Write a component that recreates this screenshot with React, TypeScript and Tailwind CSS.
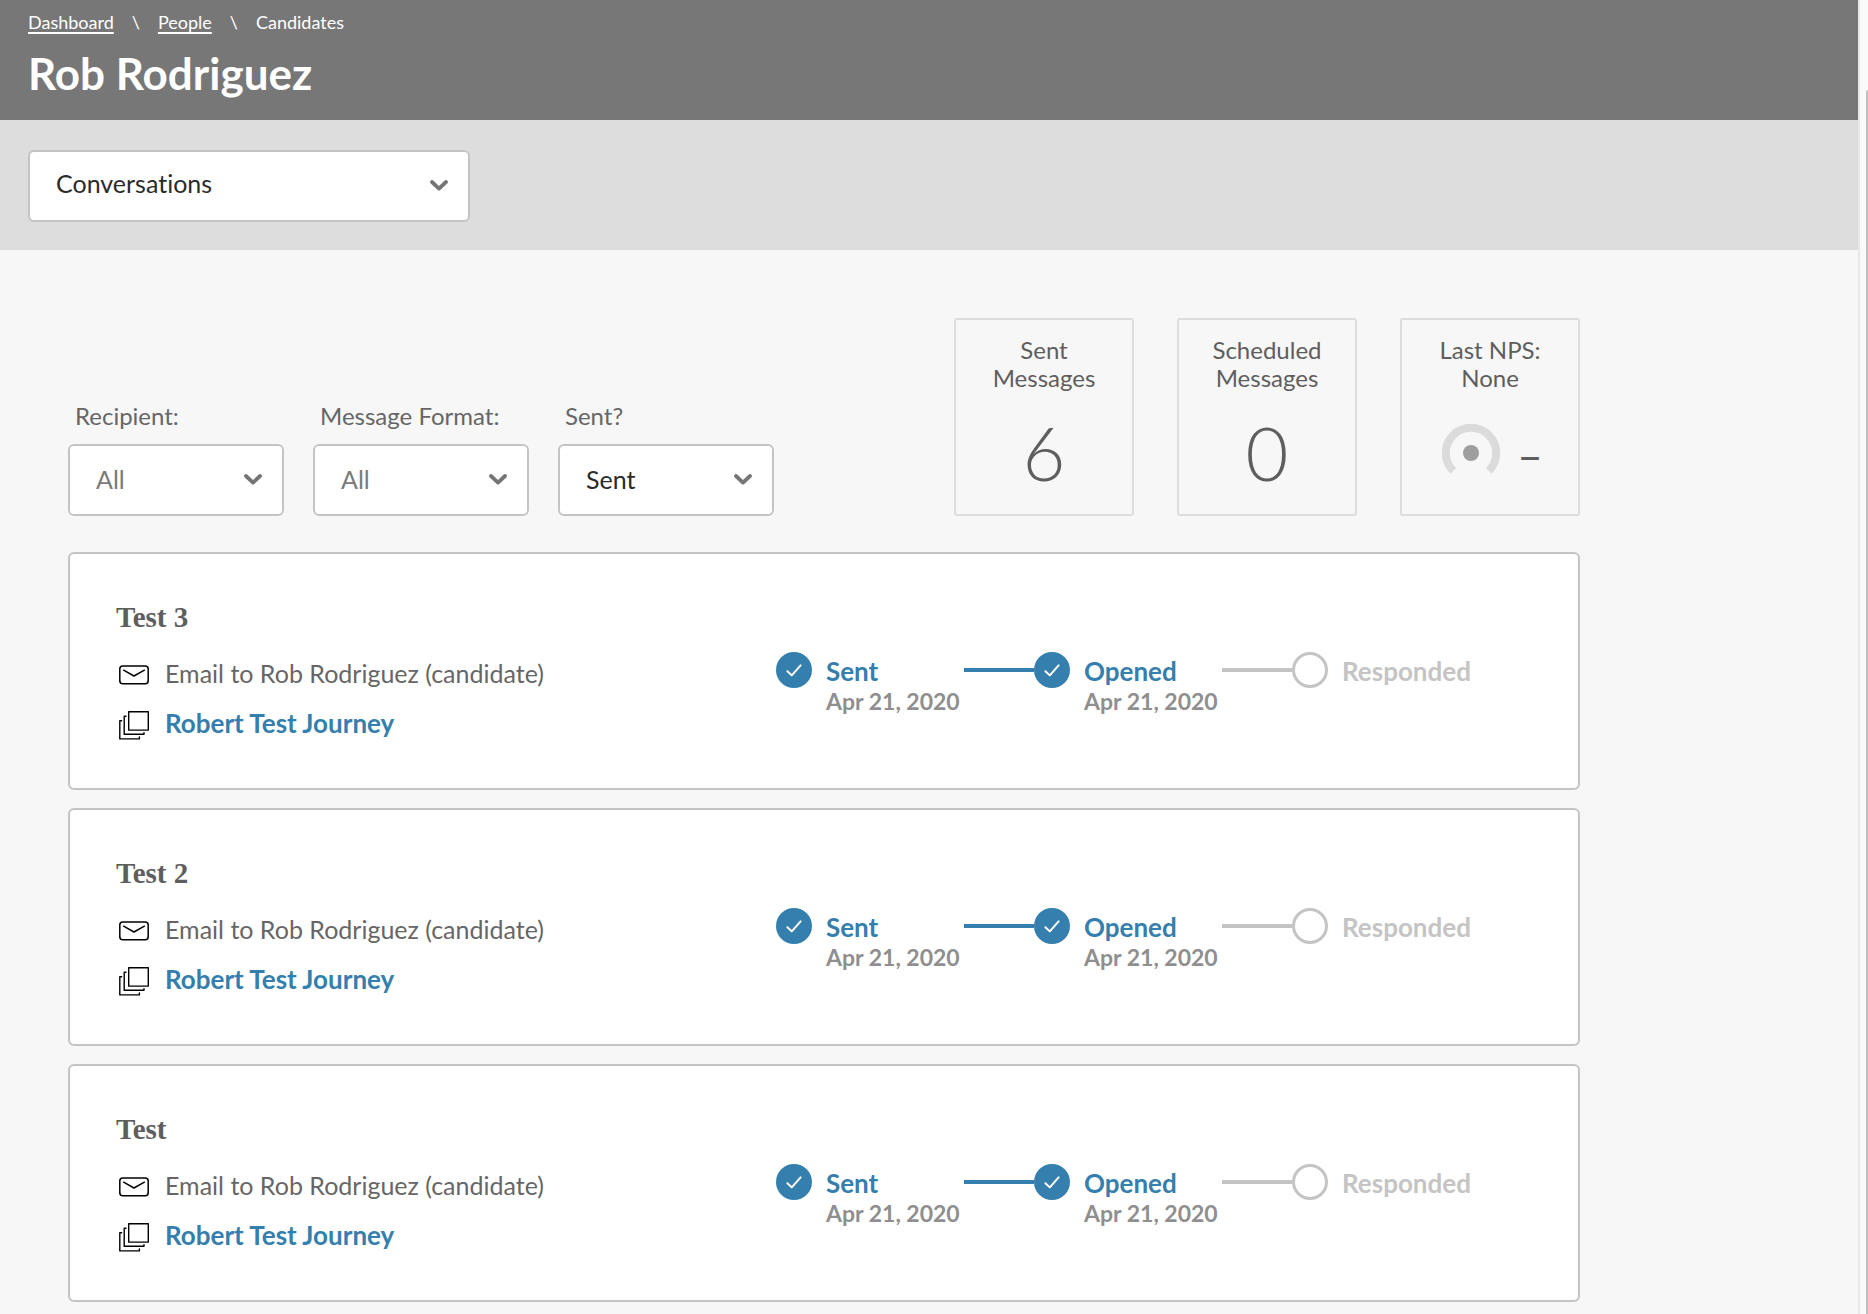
import React from "react";

function Chevron() {
  return (
    <svg
      aria-hidden="true"
      viewBox="0 0 18 11"
      className="pointer-events-none absolute top-[30px] right-[22px] h-[11px] w-[18px]"
      fill="none"
      stroke="#757575"
      strokeWidth="3.8"
      strokeLinecap="round"
      strokeLinejoin="round"
    >
      <path d="M2 2 L9 8.6 L16 2" />
    </svg>
  );
}

function SelectBox({ id, options, className, label }: { id: string; options: string[]; className: string; label?: string }) {
  return (
    <div className="relative">
      <select
        id={id}
        aria-label={label}
        defaultValue={options[0]}
        className={`h-[72px] w-full appearance-none rounded-md border-2 border-[#c4c4c4] bg-white pr-12 pl-[26px] text-[25px] ${className}`}
      >
        {options.map((o) => (
          <option key={o}>{o}</option>
        ))}
      </select>
      <Chevron />
    </div>
  );
}

function Filter({ id, label, options, className }: { id: string; label: string; options: string[]; className: string }) {
  return (
    <div className="flex w-[216px] flex-col">
      <label htmlFor={id} className="mb-3 pl-[7px] text-2xl leading-8 whitespace-nowrap text-[#666666]">
        {label}
      </label>
      <SelectBox id={id} options={options} className={className} />
    </div>
  );
}

function StatCard({ title, children }: { title: [string, string]; children: React.ReactNode }) {
  return (
    <section className="flex h-[198px] w-[180px] flex-col items-center rounded-[3px] border-2 border-[#dddddd] pt-4">
      <h2 className="text-center text-2xl leading-7 text-[#5e5e5e]">
        {title[0]}
        <br />
        {title[1]}
      </h2>
      <div className="mt-[18px] flex h-[86px] items-center text-[#5e5e5e]">{children}</div>
    </section>
  );
}

function Gauge() {
  return (
    <svg aria-hidden="true" viewBox="0 0 60 60" className="ml-1 h-[60px] w-[60px]" fill="none">
      <path d="M12.2 47.8 A25.2 25.2 0 1 1 47.8 47.8" stroke="#dbdbdb" strokeWidth="8" />
      <circle cx="30" cy="30" r="8" fill="#9e9e9e" />
    </svg>
  );
}

function MailIcon() {
  return (
    <svg aria-hidden="true" viewBox="0 0 30 20" className="h-5 w-[30px]" fill="none" stroke="#000" strokeWidth="1.5" strokeLinecap="round" strokeLinejoin="round">
      <rect x="0.8" y="1" width="28.4" height="17.8" rx="3" />
      <path d="M4.6 5.2 L15 11 L25.4 5.2" />
    </svg>
  );
}

function JourneyIcon() {
  return (
    <svg aria-hidden="true" viewBox="0 0 30 30" className="h-[30px] w-[30px]" fill="none" stroke="#000" strokeWidth="1.4" strokeLinecap="round" strokeLinejoin="round">
      <rect x="9.7" y="1.7" width="19.6" height="18.4" />
      <path d="M7 6.2 H5.2 V24.3 H25 V22.6" />
      <path d="M2.6 10.7 H0.8 V28.9 H20.4 V27" />
    </svg>
  );
}

type Step = { name: string; date?: string; done: boolean };

const steps: Step[] = [
  { name: "Sent", date: "Apr 21, 2020", done: true },
  { name: "Opened", date: "Apr 21, 2020", done: true },
  { name: "Responded", done: false },
];

function Stepper() {
  return (
    <ol className="flex items-start pt-[51px]">
      {steps.map((s, i) => {
        const next = steps[i + 1];
        return (
          <li key={s.name} className="flex items-start">
            {s.done ? (
              <span className="flex h-9 w-9 shrink-0 items-center justify-center rounded-full bg-[#347fad]">
                <svg aria-hidden="true" viewBox="0 0 16 13" className="h-[13px] w-4" fill="none" stroke="#fff" strokeWidth="2" strokeLinecap="round" strokeLinejoin="round">
                  <path d="M1.4 7.2 L5.8 11.4 L14.6 1.4" />
                </svg>
              </span>
            ) : (
              <span className="h-9 w-9 shrink-0 rounded-full border-[3px] border-[#c4c4c4]" />
            )}
            <div className="ml-[14px] w-[138px] font-bold whitespace-nowrap">
              <p className={`pt-1 text-[26px] leading-[30px] ${s.done ? "text-[#347fad]" : "text-[#c4c4c4]"}`}>{s.name}</p>
              {s.date && <p className="text-[23px] leading-[30px] text-[#8f8f8f]">{s.date}</p>}
            </div>
            {next && <span className={`mt-4 h-1 w-[70px] ${next.done ? "bg-[#347fad]" : "bg-[#c4c4c4]"}`} />}
          </li>
        );
      })}
    </ol>
  );
}

function MessageCard({ title }: { title: string }) {
  return (
    <article className="flex min-h-[238px] justify-between rounded-md border-2 border-[#c4c4c4] bg-white pt-[47px] pr-[98px] pb-9 pl-[46px]">
      <div>
        <h3 className="font-['Liberation_Serif',serif] text-[29px] leading-8 font-bold text-[#5e5e5e]">{title}</h3>
        <div className="mt-6 flex h-9 items-center gap-4 pl-[3px]">
          <MailIcon />
          <p className="pb-1 text-[25px] leading-8 text-[#666666]">Email to Rob Rodriguez (candidate)</p>
        </div>
        <div className="mt-[14px] flex h-9 items-center gap-4 pl-[3px]">
          <JourneyIcon />
          <a href="#journey" className="pb-1 text-[26px] leading-8 font-bold text-[#347fad]">
            Robert Test Journey
          </a>
        </div>
      </div>
      <Stepper />
    </article>
  );
}

export default function App() {
  return (
    <div className="flex min-h-screen bg-[#f7f7f7] font-['Lato',sans-serif] [font-variant-ligatures:none]">
      <div className="min-w-0 flex-1">
        <header className="h-[120px] bg-[#777777] px-7 pt-2 text-white">
          <nav aria-label="Breadcrumb" className="flex gap-[18px] text-lg leading-7">
            <a href="#dashboard" className="underline decoration-2 underline-offset-3">
              Dashboard
            </a>
            <span>\</span>
            <a href="#people" className="underline decoration-2 underline-offset-3">
              People
            </a>
            <span>\</span>
            <span>Candidates</span>
          </nav>
          <h1 className="mt-[11px] text-[44px] leading-[52px] font-bold">Rob Rodriguez</h1>
        </header>

        <div className="h-[130px] bg-[#dddddd] px-7 pt-[30px]">
          <div className="w-[442px] max-w-full">
            <SelectBox id="section" label="Section" options={["Conversations"]} className="pb-1 text-[#2b2b2b]" />
          </div>
        </div>

        <main className="pt-[68px] pb-3 pl-[68px]">
          <div className="max-w-[1512px]">
            <div className="flex items-end justify-between">
              <div className="flex gap-[29px]">
                <Filter id="recipient" label="Recipient:" options={["All"]} className="text-[#7a7a7a]" />
                <Filter id="format" label="Message Format:" options={["All"]} className="text-[#7a7a7a]" />
                <Filter id="sent" label="Sent?" options={["Sent"]} className="text-[#2b2b2b]" />
              </div>
              <div className="flex gap-[43px]">
                <StatCard title={["Sent", "Messages"]}>
                  <span className="text-[74px] leading-none font-light">6</span>
                </StatCard>
                <StatCard title={["Scheduled", "Messages"]}>
                  <span className="text-[74px] leading-none font-light">0</span>
                </StatCard>
                <StatCard title={["Last NPS:", "None"]}>
                  <Gauge />
                  <span className="ml-4 pt-1 text-[44px] leading-none">–</span>
                </StatCard>
              </div>
            </div>

            <div className="mt-9 flex flex-col gap-[18px]">
              <MessageCard title="Test 3" />
              <MessageCard title="Test 2" />
              <MessageCard title="Test" />
            </div>
          </div>
        </main>
      </div>

      <div aria-hidden="true" className="flex w-[10px] shrink-0 flex-col items-end border-l-2 border-[#e8e8e8] bg-[#fafafa] pt-[90px]">
        <div className="w-0.5 flex-1 rounded-tl-[2px] bg-[#c1c1c1]" />
      </div>
    </div>
  );
}
